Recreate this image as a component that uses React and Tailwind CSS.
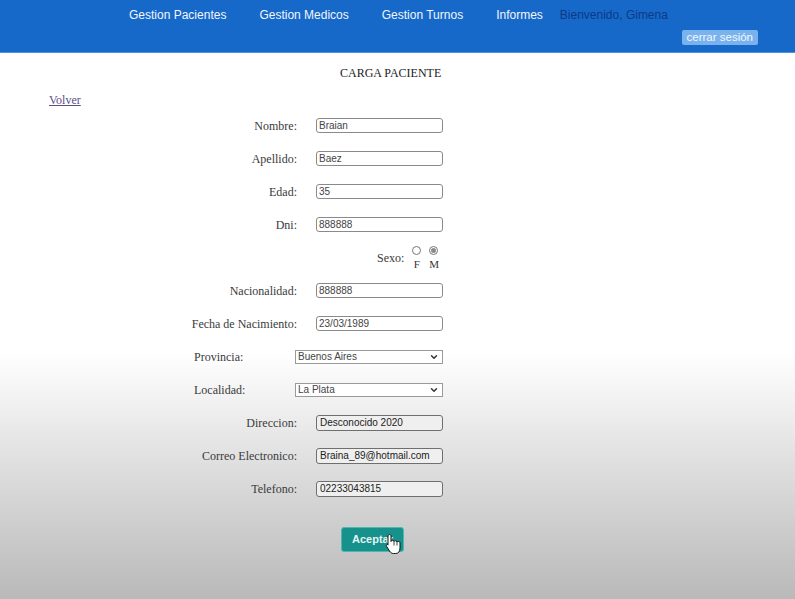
import { ChevronDown } from "lucide-react";

const serif = { fontFamily: '"Liberation Serif", "Times New Roman", serif' };

const navItems = [
  { label: "Gestion Pacientes", ml: "ml-0" },
  { label: "Gestion Medicos", ml: "ml-[33px]" },
  { label: "Gestion Turnos", ml: "ml-[33px]" },
  { label: "Informes", ml: "ml-[33px]" },
];

function TextRow({ label, value, filled }) {
  return (
    <div className="flex h-[33px] items-center">
      <label className="w-[297px] text-right text-[12px] text-[#3a3a3a]">{label}</label>
      <input
        readOnly
        value={value}
        className={
          filled
            ? "ml-[19px] h-[16px] w-[127px] rounded-[3px] border border-[#6f6f6f] bg-[#efefef] px-[3px] font-['Liberation_Sans',Arial,sans-serif] text-[10px] text-[#222] outline-none"
            : "ml-[19px] h-[15px] w-[127px] rounded-[3px] border border-[#8a8a8a] bg-white px-[2px] font-['Liberation_Sans',Arial,sans-serif] text-[10px] text-[#444] outline-none"
        }
      />
    </div>
  );
}

function SelectRow({ label, value }) {
  return (
    <div className="flex h-[33px] items-center">
      <label className="ml-[194px] w-[101px] text-[12px] text-[#3a3a3a]">{label}</label>
      <div className="relative flex">
        <select
          defaultValue={value}
          className="h-[14px] w-[148px] appearance-none rounded-none border border-[#9a9a9a] bg-white px-[2px] py-0 font-['Liberation_Sans',Arial,sans-serif] text-[10px] leading-[12px] text-[#444] outline-none"
        >
          <option>{value}</option>
        </select>
        <ChevronDown
          size={10}
          strokeWidth={3.5}
          className="pointer-events-none absolute right-[4px] top-[2px] text-[#333]"
        />
      </div>
    </div>
  );
}

function Radio({ checked }) {
  return (
    <span className="flex h-[9px] w-[9px] items-center justify-center rounded-full border border-[#777] bg-white">
      {checked && <span className="h-[5px] w-[5px] rounded-full bg-[#8a8a8a]" />}
    </span>
  );
}

function HandCursor() {
  return (
    <svg
      width="16"
      height="22"
      viewBox="0 0 16 22"
      className="absolute left-[44px] top-[7px]"
    >
      <path
        d="M4.5 1.5 C5.3 1.5 6 2.2 6 3 L6 8.5 C6.3 7 8.8 7 9 8.5 C9.3 7.5 11.8 7.5 12 9 C12.3 8.1 14.8 8.2 15 9.7 L15 15 C15 18.5 13.5 20.5 10.5 20.5 L8.5 20.5 C6.5 20.5 5.5 19.5 4.5 18 L1.5 13.2 C0.9 12.2 2.2 10.9 3.2 11.8 L3 11.7 L3 3 C3 2.2 3.7 1.5 4.5 1.5 Z"
        fill="#fff"
        stroke="#111"
        strokeWidth="1"
        strokeLinejoin="round"
      />
      <path d="M9 8.6 V12.5 M12 9 V12.5" stroke="#111" strokeWidth="0.8" fill="none" />
    </svg>
  );
}

export default function App() {
  return (
    <div className="flex h-[599px] w-full flex-col overflow-hidden bg-linear-to-b from-white from-[59%] to-[#b9b9b9]">
      {/* Header */}
      <header className="flex h-[53px] flex-col border-b border-[#4f92de] bg-[#1769c9] font-['Liberation_Sans',Arial,sans-serif]">
        <nav className="flex items-center pl-[129px] pt-[7px] text-[12px] leading-[16px]">
          {navItems.map((n) => (
            <a key={n.label} className={`${n.ml} text-[#f2f6fc]`}>
              {n.label}
            </a>
          ))}
          <span className="ml-[17px] text-[#0c3a86]">Bienvenido, Gimena</span>
        </nav>
        <div className="mt-[7px] flex justify-end pr-[37px]">
          <button className="h-[15px] rounded-[2px] bg-[#7ab2ee] px-[5px] text-[11.5px] leading-[15px] text-[#f4f8fd]">
            cerrar sesión
          </button>
        </div>
      </header>

      {/* Content */}
      <main className="flex flex-1 flex-col" style={serif}>
        <h1 className="mt-[12px] pl-[340px] text-[12px] leading-[16px] text-[#222]">
          CARGA PACIENTE
        </h1>
        <a className="ml-[49px] mt-[12px] w-fit text-[12px] leading-[14px] text-[#5b4f86] underline">
          Volver
        </a>

        <form className="mt-[2px] flex flex-col">
          <TextRow label="Nombre:" value="Braian" />
          <TextRow label="Apellido:" value="Baez" />
          <TextRow label="Edad:" value="35" />
          <TextRow label="Dni:" value="888888" />

          <div className="flex h-[33px] items-center">
            <span className="ml-[377px] text-[12px] text-[#3a3a3a]">Sexo:</span>
            <div className="ml-[8px] flex flex-col items-center">
              <div className="flex gap-[8px]">
                <Radio />
                <Radio checked />
              </div>
              <div className="mt-[3px] flex gap-[8px] text-[11px] leading-[12px] text-[#333]">
                <span className="w-[9px] text-center">F</span>
                <span className="w-[9px] text-center">M</span>
              </div>
            </div>
          </div>

          <TextRow label="Nacionalidad:" value="888888" />
          <TextRow label="Fecha de Nacimiento:" value="23/03/1989" />
          <SelectRow label="Provincia:" value="Buenos Aires" />
          <SelectRow label="Localidad:" value="La Plata" />
          <TextRow label="Direccion:" value="Desconocido 2020" filled />
          <TextRow label="Correo Electronico:" value="Braina_89@hotmail.com" filled />
          <TextRow label="Telefono:" value="02233043815" filled />

          <div className="mt-[21px] flex pl-[341px]">
            <div className="relative">
              <button
                type="button"
                className="h-[25px] w-[63px] rounded-[3px] border border-[#4fb6b0] bg-[#17918c] font-['Liberation_Sans',Arial,sans-serif] text-[11px] font-semibold text-[#e6f4f3]"
              >
                Aceptar
              </button>
              <HandCursor />
            </div>
          </div>
        </form>
      </main>
    </div>
  );
}
